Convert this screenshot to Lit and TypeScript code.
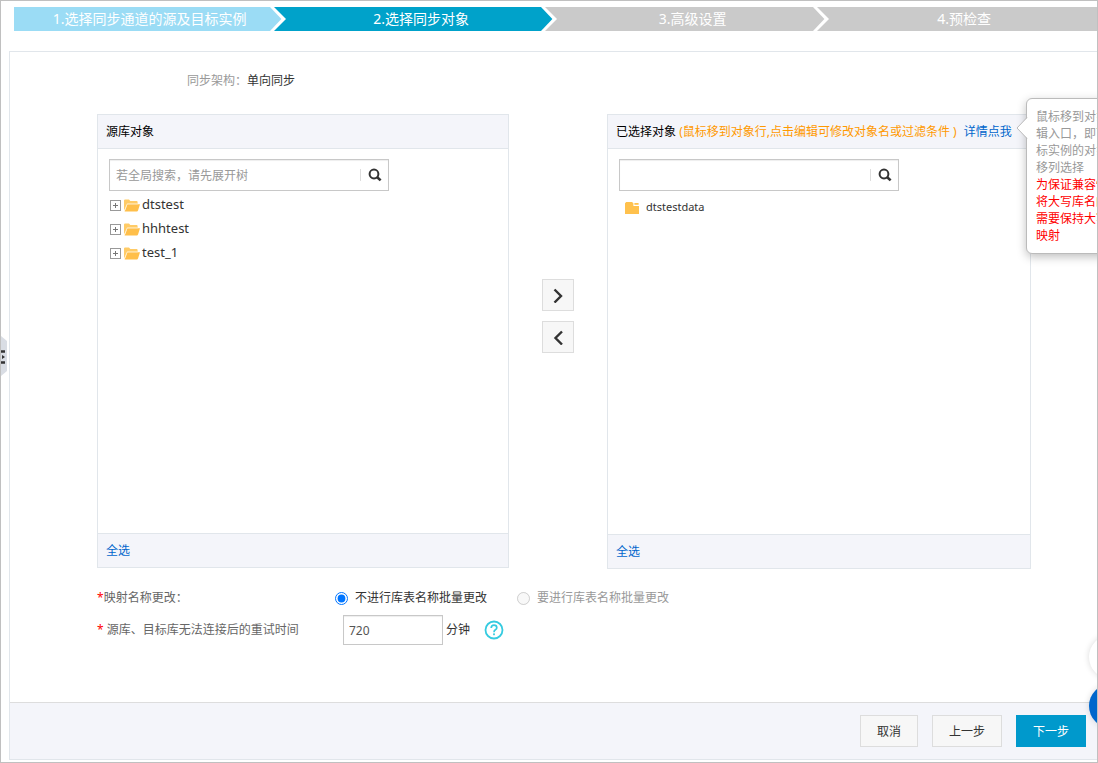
import { LitElement, html, css, svg } from "lit";
import { customElement, property, state } from "lit/decorators.js";

const searchIcon = html`<svg width="14" height="14" viewBox="0 0 14 14" aria-hidden="true">
  <circle cx="6" cy="6" r="4.4" fill="none" stroke="#333" stroke-width="2"></circle>
  <path d="M9 9l3.6 3.4" stroke="#333" stroke-width="2.6" fill="none"></path>
</svg>`;

const expandIcon = html`<svg width="11" height="11" viewBox="0 0 11 11" aria-hidden="true">
  <rect x=".5" y=".5" width="10" height="10" fill="#fff" stroke="#999"></rect>
  <path d="M3 5.5h5M5.5 3v5" stroke="#777"></path>
</svg>`;

const openFolderIcon = html`<svg width="16" height="13" viewBox="0 0 16 13" aria-hidden="true">
  <path d="M0 11.5V1.6Q0 .5 1.1 .5H5l1.3 1.6h6.3q1 0 1 1V5H3.6z" fill="#ffcb66"></path>
  <path d="M3.4 5.2H16l-2 6.4q-.3 .9-1.2 .9H.6z" fill="#ffbf4a"></path>
  <path d="M.6 11.6L3.2 4.8H13.8" stroke="#fff0d0" stroke-width=".8" fill="none"></path>
</svg>`;

const closedFolderIcon = html`<svg width="14" height="12" viewBox="0 0 14 12" aria-hidden="true">
  <path d="M0 12V1.2L1.2 0H7l1.4 1.2V4H14v8z" fill="#ffc14d"></path>
  <path d="M9.4 1h4.2v1.8H9.4z" fill="#ffc14d"></path>
</svg>`;

@customElement("step-bar")
class StepBar extends LitElement {
  static styles = css`
    :host { display: block; }
    .steps { display: flex; margin: 0; padding: 0; list-style: none; }
    .step {
      display: flex; flex: 1 1 0; height: 24px; min-width: 0;
      color: #fff; font-size: 14px; line-height: 24px;
    }
    .label { flex: 1; padding-left: 16px; text-align: center; white-space: nowrap; }
    .chevron { flex: none; display: block; }
    .done { background: #9bdcf5; }
    .current { background: #00a2ca; }
    .todo { background: #cacaca; }
  `;
  private steps = [
    { text: "1.选择同步通道的源及目标实例", kind: "done", fill: "#9bdcf5" },
    { text: "2.选择同步对象", kind: "current", fill: "#00a2ca" },
    { text: "3.高级设置", kind: "todo", fill: "#cacaca" },
    { text: "4.预检查", kind: "todo", fill: "#cacaca" },
  ];
  render() {
    return html`<ol class="steps">
      ${this.steps.map((s, i) => {
        const next = this.steps[i + 1] ?? s;
        return html`<li class="step ${s.kind}">
          <span class="label">${s.text}</span>
          <svg class="chevron" width="16" height="24" viewBox="0 0 16 24" aria-hidden="true">
            ${i < 3
              ? svg`<rect width="16" height="24" fill=${next.fill}></rect>
                <path d="M0 0H4L16 12L4 24H0z" fill="#fff"></path>
                <path d="M0 0L11.4 12L0 24z" fill=${s.fill}></path>`
              : ""}
          </svg>
        </li>`;
      })}
    </ol>`;
  }
}

@customElement("search-box")
class SearchBox extends LitElement {
  static styles = css`
    :host { display: block; max-width: 280px; }
    .box {
      display: flex; align-items: center; box-sizing: border-box; height: 32px;
      border: 1px solid #c8c8c8; background: #fff; box-shadow: inset 0 1px 1px #eee;
    }
    .field {
      flex: 1; min-width: 0; height: 28px; padding: 0 6px; border: 0; outline: 0;
      background: transparent; font: inherit; color: #333;
    }
    .field::placeholder { color: #999; opacity: 1; }
    .go {
      display: flex; align-items: center; justify-content: center; width: 28px; height: 12px;
      padding: 0; border: 0; border-left: 1px solid #ddd; background: none;
    }
    .go svg { flex: none; }
  `;
  @property() placeholder = "";
  @property() name = "";
  render() {
    return html`<div class="box">
      <input class="field" type="text" aria-label=${this.name} placeholder=${this.placeholder} />
      <button class="go" type="button" aria-label="搜索">${searchIcon}</button>
    </div>`;
  }
}

@customElement("app-root")
class AppRoot extends LitElement {
  static styles = css`
    :host {
      display: block;
      font: 12px/18px "Noto Sans", "Noto Sans CJK SC", sans-serif;
      color: #333;
    }
    .frame {
      position: relative; display: flex; flex-direction: column; box-sizing: border-box;
      min-height: 100vh; padding: 6px 0 2px 8px; overflow: hidden;
      border: 1px solid #c0c0c0; background: #fff;
    }
    .progress { margin: 0 -3px 20px 5px; }
    .card {
      display: flex; flex: 1; flex-direction: column;
      border: 1px solid #e1e6eb; border-right: 0;
    }
    .content { flex: 1; padding: 20px 66px 40px 87px; }
    .arch { margin: 0 0 24px; padding-left: 90px; }
    .muted { color: #999; }
    .transfer { display: grid; grid-template-columns: minmax(0, 412fr) 98px minmax(0, 424fr); align-items: start; }
    .panel { position: relative; border: 1px solid #e1e6eb; }
    .head, .foot { padding: 8px; background: #f4f5fa; }
    .head { border-bottom: 1px solid #e1e6eb; font-weight: 400; font-size: 12px; margin: 0; color: #000; line-height: 17px; white-space: nowrap; }
    .foot { border-top: 1px solid #e1e6eb; line-height: 17px; }
    .list { box-sizing: border-box; min-height: 384px; padding: 10px 11px; }
    .chosen { min-height: 385px; }
    .hint { margin-right: 4px; color: #ff9900; }
    a { color: #0066cc; text-decoration: none; }
    .tree, .items { margin: 0; padding: 0; list-style: none; }
    .tree { padding: 2px 1px; font-size: 13px; }
    .node { display: flex; align-items: center; height: 24px; line-height: 22px; }
    .toggle { display: flex; padding: 0; margin-right: 3px; border: 0; background: none; }
    .name { margin-left: 2px; padding-bottom: 2px; }
    .items { padding: 5px 6px; font-size: 11px; }
    .items .node { gap: 5px; }
    .movers { display: flex; flex-direction: column; align-items: center; gap: 10px; padding-top: 165px; }
    .mover {
      display: flex; align-items: center; justify-content: center; width: 32px; height: 32px;
      padding: 0; border: 1px solid #ddd; background: #f7f7f7;
    }
    .tip {
      position: absolute; top: -17px; left: calc(100% - 4px); z-index: 1; box-sizing: border-box;
      width: 220px; padding: 9px; border: 1px solid #bbb; border-radius: 6px;
      background: #fff; box-shadow: 0 3px 10px rgba(0, 0, 0, 0.25); color: #999; line-height: 17px;
    }
    .tip p { margin: 0; white-space: pre-line; }
    .tip .warn { color: #f00; }
    .beak { position: absolute; top: 18px; left: -11px; }
    .row { display: grid; grid-template-columns: 238px 1fr; align-items: center; color: #666; }
    .rename { margin-top: 20px; }
    .retry { margin-top: 8px; line-height: 20px; }
    .star { color: #f00; }
    .choices { display: flex; gap: 30px; }
    .choice { display: flex; align-items: center; gap: 7px; color: #333; }
    .choice input { width: 13px; height: 13px; margin: 0; }
    .off { color: #999; }
    .time { display: flex; align-items: center; padding-left: 8px; color: #333; }
    .minutes {
      box-sizing: border-box; width: 100px; height: 30px; margin-right: 3px; padding: 0 5px;
      border: 1px solid #c8c8c8; box-shadow: inset 0 1px 1px #eee; font: inherit; color: #555;
    }
    .help { display: flex; margin-left: 14px; padding: 0; border: 0; background: none; }
    .actions {
      display: flex; justify-content: flex-end; gap: 14px; padding: 12px 11px;
      border-top: 1px solid #ddd; background: #f4f5fa;
    }
    .btn {
      height: 32px; padding: 2px 16px 0; border: 1px solid #ddd; border-radius: 0;
      background: #f7f7f7; color: #333; font: inherit;
    }
    .primary { border-color: #0099cc; background: #0099cc; color: #fff; }
    .handle { position: absolute; left: 0; top: 335px; padding: 0; border: 0; background: none; display: flex; }
    .bubble {
      position: absolute; right: -36px; width: 44px; height: 44px; padding: 0; border: 0;
      border-radius: 50%; box-shadow: 0 0 6px rgba(0, 0, 0, 0.15);
    }
    .chat { bottom: 83px; background: #fff; }
    .service { bottom: 34px; background: #0066cc; }
  `;

  @state() private rename = "no";
  private databases = ["dtstest", "hhhtest", "test_1"];

  render() {
    return html`<main class="frame">
      <step-bar class="progress"></step-bar>
      <section class="card">
        <div class="content">
          <p class="arch"><span class="muted">同步架构：</span>单向同步</p>
          <div class="transfer">
            <section class="panel">
              <h2 class="head">源库对象</h2>
              <div class="list">
                <search-box name="源库对象" placeholder="若全局搜索，请先展开树"></search-box>
                <ul class="tree">
                  ${this.databases.map(
                    (d) => html`<li class="node">
                      <button class="toggle" type="button" aria-label="展开">${expandIcon}</button>
                      ${openFolderIcon}<span class="name">${d}</span>
                    </li>`
                  )}
                </ul>
              </div>
              <div class="foot"><a href="#all">全选</a></div>
            </section>
            <div class="movers">
              <button class="mover" type="button" aria-label="添加">
                <svg width="12" height="16" viewBox="0 0 12 16"><path d="M2.5 2.5L9 9L2.5 15.5" fill="none" stroke="#333" stroke-width="2.4"></path></svg>
              </button>
              <button class="mover" type="button" aria-label="移除">
                <svg width="12" height="16" viewBox="0 0 12 16"><path d="M10 2.5L3.5 9L10 15.5" fill="none" stroke="#333" stroke-width="2.4"></path></svg>
              </button>
            </div>
            <section class="panel">
              <h2 class="head">已选择对象 <span class="hint">(鼠标移到对象行,点击编辑可修改对象名或过滤条件 )</span> <a href="#detail">详情点我</a></h2>
              <div class="list chosen">
                <search-box name="已选择对象"></search-box>
                <ul class="items">
                  <li class="node">${closedFolderIcon}<span class="name">dtstestdata</span></li>
                </ul>
              </div>
              <div class="foot"><a href="#all">全选</a></div>
              <aside class="tip">
                <svg class="beak" width="12" height="22" viewBox="0 0 12 22" aria-hidden="true">
                  <path d="M12 0L1 11L12 22z" fill="#fff"></path>
                  <path d="M11 .5L1 11L11 21.5" fill="none" stroke="#bbb"></path>
                </svg>
                <p>${"鼠标移到对象\n辑入口，即可\n标实例的对象\n移列选择"}</p>
                <p class="warn">${"为保证兼容性\n将大写库名的\n需要保持大写\n映射"}</p>
              </aside>
            </section>
          </div>
          <div class="row rename">
            <span><span class="star">*</span>映射名称更改：</span>
            <div class="choices">
              <label class="choice"><input type="radio" name="rename" .checked=${this.rename === "no"} />不进行库表名称批量更改</label>
              <label class="choice off"><input type="radio" name="rename" disabled />要进行库表名称批量更改</label>
            </div>
          </div>
          <div class="row retry">
            <label for="minutes"><span class="star">*</span> 源库、目标库无法连接后的重试时间</label>
            <div class="time">
              <input class="minutes" id="minutes" type="text" .value=${"720"} />分钟
              <button class="help" type="button" aria-label="帮助">
                <svg width="20" height="20" viewBox="0 0 20 20">
                  <circle cx="10" cy="10" r="8.5" fill="none" stroke="#35cbe0" stroke-width="1.8"></circle>
                  <path d="M7.2 8Q7.2 5.2 10 5.2T12.8 7.8Q12.8 9 11.4 9.8T10 12.2" fill="none" stroke="#35cbe0" stroke-width="1.7"></path>
                  <rect x="9.1" y="13.4" width="1.8" height="1.8" fill="#35cbe0"></rect>
                </svg>
              </button>
            </div>
          </div>
        </div>
        <footer class="actions">
          <button class="btn" type="button">取消</button>
          <button class="btn" type="button">上一步</button>
          <button class="btn primary" type="button">下一步</button>
        </footer>
      </section>
      <button class="handle" type="button" aria-label="展开菜单">
        <svg width="6" height="40" viewBox="0 0 6 40">
          <path d="M0 0L6 5V35L0 40z" fill="#d9dde4"></path>
          <path d="M0 15.5h4M0 26.5h4" stroke="#333" stroke-width="2.4"></path>
          <path d="M1 19l3 2l-3 2z" fill="#333"></path>
        </svg>
      </button>
      <button class="bubble chat" type="button" aria-label="咨询"></button>
      <button class="bubble service" type="button" aria-label="客服"></button>
    </main>`;
  }
}
